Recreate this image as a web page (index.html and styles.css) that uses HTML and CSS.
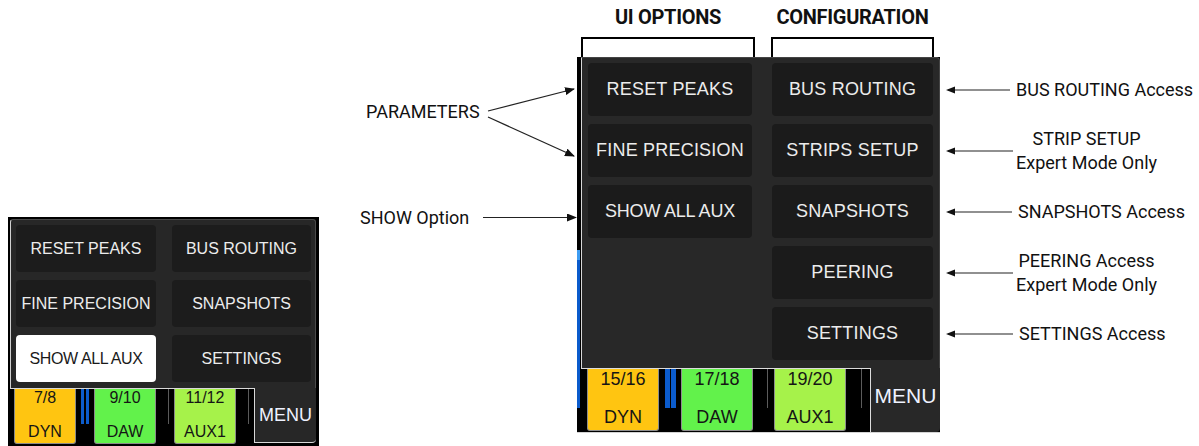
FILE: index.html
```html
<!DOCTYPE html>
<html lang="en">
  <head>
    <meta charset="UTF-8" />
    <meta name="viewport" content="width=device-width, initial-scale=1.0" />
    <title>Menu options</title>
    <link rel="stylesheet" href="styles.css">
  </head>
  <body>
    <!-- small screenshot, left -->
    <div class="mini">
      <div class="mini-popup">
        <div class="mini-col">
          <div class="mini-btn">RESET PEAKS</div>
          <div class="mini-btn">FINE PRECISION</div>
          <div class="mini-btn active">SHOW ALL AUX</div>
        </div>
        <div class="mini-col">
          <div class="mini-btn">BUS ROUTING</div>
          <div class="mini-btn">SNAPSHOTS</div>
          <div class="mini-btn">SETTINGS</div>
        </div>
      </div>
      <div class="mini-bottom">
        <div class="mini-strips">
          <div class="mini-strip dyn"><span>7/8</span><span class="name">DYN</span></div>
          <div class="mini-gap"><div class="mini-meter"></div><div class="mini-meter"></div></div>
          <div class="mini-strip daw"><span>9/10</span><span class="name">DAW</span></div>
          <div class="mini-gap"><div class="mini-line"></div></div>
          <div class="mini-strip aux"><span>11/12</span><span class="name">AUX1</span></div>
          <div class="mini-gap"><div class="mini-line"></div></div>
        </div>
        <div class="mini-menu">MENU</div>
      </div>
    </div>

    <!-- annotated screenshot, right -->
    <div class="diagram">
      <div class="notes-left">
        <svg class="left-arrows" width="237" height="446">
          <defs>
            <marker id="head" markerWidth="10" markerHeight="8" refX="9" refY="4" orient="auto" markerUnits="userSpaceOnUse">
              <path d="M0,0 L10,4 L0,8 Z" fill="#111" />
            </marker>
          </defs>
          <line x1="148" y1="111" x2="234" y2="89" stroke="#222" stroke-width="1.2" marker-end="url(#head)" />
          <line x1="148" y1="117" x2="234" y2="156" stroke="#222" stroke-width="1.2" marker-end="url(#head)" />
          <line x1="143" y1="217.5" x2="236" y2="217.5" stroke="#222" stroke-width="1.2" marker-end="url(#head)" />
        </svg>
        <div class="note params">PARAMETERS</div>
        <div class="note show">SHOW Option</div>
      </div>

      <div class="device">
        <div class="heads">
          <div class="group ui">
            <div class="title">UI OPTIONS</div>
            <div class="bracket"></div>
          </div>
          <div class="group conf">
            <div class="title">CONFIGURATION</div>
            <div class="bracket"></div>
          </div>
        </div>
        <div class="screen">
          <div class="edge"><div class="edge-meter"></div></div>
          <div class="main">
            <div class="popup">
              <div class="col left">
                <div class="btn">RESET PEAKS</div>
                <div class="btn">FINE PRECISION</div>
                <div class="btn tight">SHOW ALL AUX</div>
              </div>
              <div class="col right">
                <div class="btn">BUS ROUTING</div>
                <div class="btn">STRIPS SETUP</div>
                <div class="btn">SNAPSHOTS</div>
                <div class="btn">PEERING</div>
                <div class="btn">SETTINGS</div>
              </div>
            </div>
            <div class="bottom">
              <div class="strips">
                <div class="strip dyn"><span>15/16</span><span class="name">DYN</span></div>
                <div class="gap meters"><div class="meter"></div><div class="meter"></div></div>
                <div class="strip daw"><span>17/18</span><span class="name">DAW</span></div>
                <div class="gap"><div class="line"></div></div>
                <div class="strip aux"><span>19/20</span><span class="name">AUX1</span></div>
                <div class="gap wide"><div class="line"></div></div>
              </div>
              <div class="menu">MENU</div>
            </div>
          </div>
        </div>
      </div>

      <div class="notes-right">
        <div class="row">
          <svg class="arrow" width="70" height="10"><line x1="8" y1="5" x2="70" y2="5" stroke="#222" stroke-width="1.2" /><path d="M6,5 L15,1.5 L15,8.5 Z" fill="#111" /></svg>
          <div class="label">BUS ROUTING Access</div>
        </div>
        <div class="row">
          <svg class="arrow" width="73" height="10"><line x1="8" y1="5" x2="73" y2="5" stroke="#222" stroke-width="1.2" /><path d="M6,5 L15,1.5 L15,8.5 Z" fill="#111" /></svg>
          <div class="label two">STRIP SETUP<br>Expert Mode Only</div>
        </div>
        <div class="row">
          <svg class="arrow" width="72" height="10"><line x1="8" y1="5" x2="72" y2="5" stroke="#222" stroke-width="1.2" /><path d="M6,5 L15,1.5 L15,8.5 Z" fill="#111" /></svg>
          <div class="label">SNAPSHOTS Access</div>
        </div>
        <div class="row">
          <svg class="arrow" width="73" height="10"><line x1="8" y1="5" x2="73" y2="5" stroke="#222" stroke-width="1.2" /><path d="M6,5 L15,1.5 L15,8.5 Z" fill="#111" /></svg>
          <div class="label two">PEERING Access<br>Expert Mode Only</div>
        </div>
        <div class="row">
          <svg class="arrow" width="73" height="10"><line x1="8" y1="5" x2="73" y2="5" stroke="#222" stroke-width="1.2" /><path d="M6,5 L15,1.5 L15,8.5 Z" fill="#111" /></svg>
          <div class="label">SETTINGS Access</div>
        </div>
      </div>
    </div>
  </body>
</html>
```
FILE: styles.css
```css
* {
  box-sizing: border-box;
}
body {
  margin: 0;
  padding: 0;
  height: 446px;
  overflow: hidden;
  background: #fff;
  display: flex;
  align-items: flex-start;
  font-family: "Liberation Sans", Arial, sans-serif;
}

/* ---------- small screenshot ---------- */
.mini {
  margin: 217px 0 0 8px;
  width: 311px;
  height: 229px;
  padding: 2px 3px 0 2px;
  background: #000;
}
.mini-popup {
  height: 169px;
  display: flex;
  gap: 16px;
  padding: 5px 4px 6px 5px;
  background: #272727;
  border: 1px solid #4a4a4a;
  border-left-color: #d0d0d0;
  border-bottom: none;
  border-radius: 3px 3px 0 0;
}
.mini-col {
  display: flex;
  flex-direction: column;
  gap: 8px;
}
.mini-col:first-child {
  width: 140px;
}
.mini-col:last-child {
  width: 139px;
}
.mini-btn {
  height: 47px;
  display: flex;
  align-items: center;
  justify-content: center;
  background: #1c1c1c;
  border-radius: 4px;
  color: #ececec;
  font-size: 16px;
}
.mini-btn.active {
  background: #fff;
  color: #1a1a1a;
  letter-spacing: -0.4px;
}
.mini-bottom {
  display: flex;
  height: 56px;
}
.mini-strips {
  flex: 1;
  display: flex;
  padding-left: 4px;
  border-top: 1px solid #d8d8d8;
}
.mini-strip {
  width: 62px;
  height: 55px;
  display: flex;
  flex-direction: column;
  align-items: center;
  border: 1px solid #8a8a8a;
  border-top: none;
  border-radius: 0 0 3px 3px;
  color: #151515;
  font-size: 16px;
  line-height: 17px;
}
.mini-strip .name {
  margin-top: 17px;
}
.mini-gap {
  width: 18px;
  display: flex;
  gap: 2px;
  padding-left: 12px;
}
.mini-strips .mini-gap:nth-child(2) {
  padding-left: 5px;
}
.mini-meter {
  width: 3px;
  height: 35px;
  background: #0c5ccc;
}
.mini-line {
  width: 1px;
  height: 35px;
  background: #5a5a5a;
}
.mini-menu {
  width: 62px;
  height: 55px;
  display: flex;
  align-items: center;
  justify-content: center;
  background: #272727;
  border-left: 1px solid #d8d8d8;
  border-bottom: 1px solid #d8d8d8;
  border-radius: 0 0 4px 0;
  color: #eef2ff;
  font-size: 18px;
}

.dyn {
  background: #ffc511;
}
.daw {
  background: #62f24b;
}
.aux {
  background: #a6f24a;
}

/* ---------- annotated diagram ---------- */
.diagram {
  margin-left: 21px;
  display: flex;
  align-items: flex-start;
}
.notes-left {
  position: relative;
  width: 237px;
  height: 446px;
  display: flex;
  flex-direction: column;
  font-family: Roboto, "Liberation Sans", sans-serif;
  font-size: 18px;
  line-height: 20px;
  color: #111;
}
.left-arrows {
  position: absolute;
  left: 0;
  top: 0;
}
.note.params {
  margin-top: 102px;
  padding-left: 26px;
}
.note.show {
  margin-top: 86px;
  padding-left: 20px;
}

.device {
  width: 363px;
}
.heads {
  display: flex;
  gap: 16px;
  padding-left: 4px;
}
.group.ui {
  width: 174px;
}
.group.conf {
  width: 163px;
}
.title {
  padding-top: 5px;
  margin-bottom: 8px;
  line-height: 24px;
  text-align: center;
  font-family: Roboto, "Liberation Sans", sans-serif;
  font-weight: 700;
  font-size: 20px;
  letter-spacing: -0.3px;
  color: #111;
  white-space: nowrap;
}
.bracket {
  height: 20px;
  border: 2px solid #000;
  border-bottom: none;
}

.screen {
  display: flex;
  height: 376px;
  background: #000;
  border-bottom: 1px solid #d4d4d4;
}
.edge {
  width: 4px;
  padding-top: 193px;
}
.edge-meter {
  width: 3px;
  height: 158px;
  background: linear-gradient(#3d9cf2 0 10px, #0b5bcc 10px);
}
.main {
  width: 359px;
  display: flex;
  flex-direction: column;
}
.popup {
  height: 311px;
  display: flex;
  gap: 20px;
  padding: 5px 6px 8px 6px;
  background: #282828;
  border: 1px solid #444;
  border-left-color: #d8d8d8;
  border-bottom: none;
  border-radius: 0 4px 0 0;
}
.col {
  display: flex;
  flex-direction: column;
  gap: 8px;
}
.col.left {
  width: 164px;
}
.col.right {
  width: 161px;
}
.btn {
  height: 53px;
  display: flex;
  align-items: center;
  justify-content: center;
  background: #1b1b1b;
  border-radius: 4px;
  color: #ececec;
  font-size: 18px;
  letter-spacing: 0.2px;
  white-space: nowrap;
}
.btn.tight {
  letter-spacing: -0.2px;
}
.bottom {
  flex: 1;
  display: flex;
}
.strips {
  width: 289px;
  display: flex;
  padding-left: 6px;
  border-top: 1px solid #dcdcdc;
}
.strip {
  width: 72px;
  height: 62px;
  display: flex;
  flex-direction: column;
  align-items: center;
  border: 1px solid #8e8e8e;
  border-top: none;
  border-radius: 0 0 3px 3px;
  color: #151515;
  font-size: 18px;
  line-height: 20px;
}
.strip .name {
  margin-top: 18px;
}
.gap {
  width: 21px;
  padding-left: 14px;
}
.gap.meters {
  width: 22px;
  display: flex;
  gap: 1px;
  padding-left: 6px;
}
.gap.wide {
  width: 24px;
  padding-left: 15px;
}
.meter {
  width: 5px;
  height: 39px;
  background: #0b5bcc;
}
.line {
  width: 1px;
  height: 39px;
  background: #5c5c5c;
}
.menu {
  flex: 1;
  display: flex;
  align-items: center;
  justify-content: center;
  padding-bottom: 8px;
  background: #282828;
  border-left: 1px solid #dcdcdc;
  border-radius: 0 0 4px 0;
  color: #eef2ff;
  font-size: 21px;
}

.notes-right {
  width: 259px;
  padding-top: 63px;
  display: flex;
  flex-direction: column;
  gap: 8px;
  font-family: Roboto, "Liberation Sans", sans-serif;
  font-size: 18px;
  color: #111;
}
.row {
  height: 53px;
  display: flex;
  align-items: center;
}
.arrow {
  flex: none;
}
.label {
  margin-left: 6px;
  white-space: nowrap;
}
.label.two {
  margin-left: 3px;
  line-height: 24px;
  text-align: center;
}
```
